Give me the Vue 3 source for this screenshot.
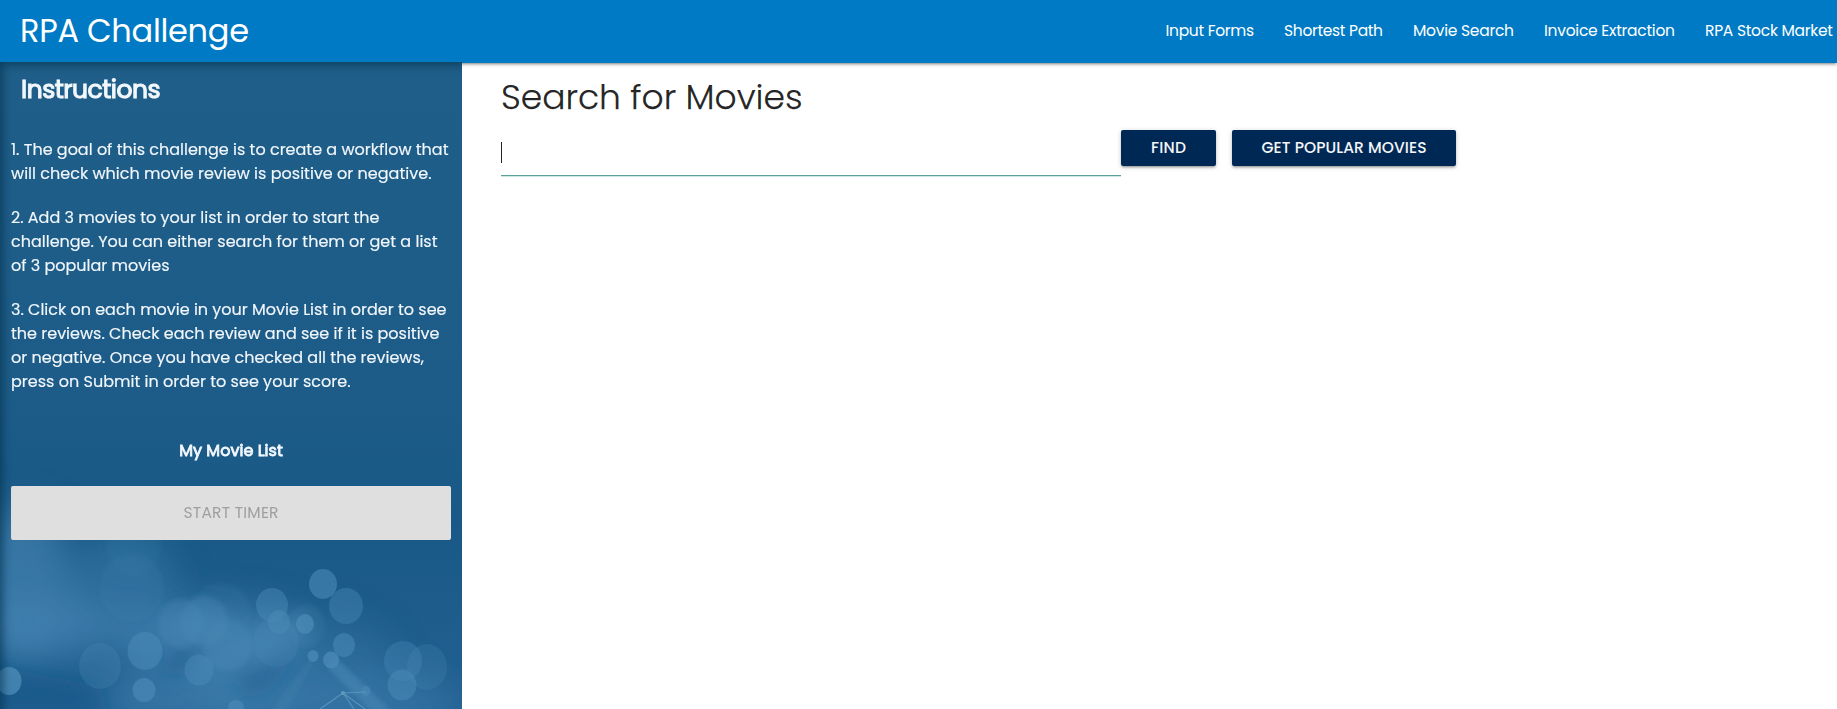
<script setup>
const nav = [
  { text: 'Input Forms', w: 88.5 },
  { text: 'Shortest Path', w: 99 },
  { text: 'Movie Search', w: 101 },
  { text: 'Invoice Extraction', w: 131 },
  { text: 'RPA Stock Market', w: 128 },
]
const steps = [
  [
    ['1. The goal of this challenge is to create a workflow that', 437.5],
    ['will check which movie review is positive or negative.', 420.5],
  ],
  [
    ['2. Add 3 movies to your list in order to start the', 368.5],
    ['challenge. You can either search for them or get a list', 426.5],
    ['of 3 popular movies', 158.5],
  ],
  [
    ['3. Click on each movie in your Movie List in order to see', 435.5],
    ['the reviews. Check each review and see if it is positive', 428.5],
    ['or negative. Once you have checked all the reviews,', 413],
    ['press on Submit in order to see your score.', 339.5],
  ],
]

// Tracks a single line of text so that it fills the given width.
const vFit = {
  mounted(el, { value }) {
    const natural = el.getBoundingClientRect().width
    const gaps = el.textContent.length - 1
    const spacing = (value - natural) / gaps
    el.style.letterSpacing = spacing + 'px'
    el.style.marginRight = -spacing + 'px'
  },
}

// Bokeh discs: cx, cy, rx, ry, opacity
const discs = [
  [323, 584, 14, 15, 0.6], [346, 606, 17, 18, 0.4], [272, 605, 16, 17, 0.45],
  [279, 622, 11, 12, 0.5], [305, 624, 9, 10, 0.7], [344, 645, 11, 12, 0.55],
  [313, 656, 5.5, 6, 0.7], [331, 660, 8, 8.5, 0.75], [145, 651, 17.5, 19, 0.55],
  [144, 690, 11.5, 12, 0.65], [9, 681, 12.5, 14, 0.8], [199, 670, 14.5, 15.5, 0.45],
  [100, 666, 21, 23, 0.25], [403, 661, 19, 20, 0.34], [427, 667, 20, 23, 0.22],
  [402, 685, 14.5, 15.5, 0.5], [276, 642, 23, 25, 0.2], [236, 707, 8, 7, 0.65],
  [366, 691, 4.5, 5, 0.6],
]
const hazyDiscs = [
  [134, 545, 28, 30, 0.08], [132, 588, 32, 34, 0.1], [181, 624, 23, 25, 0.25],
  [204, 621, 24, 25, 0.3], [307, 626, 19, 21, 0.15], [221, 612, 30, 29, 0.12],
  [228, 645, 24, 26, 0.28],
]
</script>

<template>
  <div class="page">
    <header class="topbar">
      <div class="brand"><span v-fit="229">RPA Challenge</span></div>
      <nav class="links">
        <a v-for="n in nav" :key="n.text"><span v-fit="n.w">{{ n.text }}</span></a>
      </nav>
    </header>
    <main class="body">
      <aside class="side">
        <svg class="backdrop" viewBox="0 62 462 647" width="462" height="647" aria-hidden="true">
          <defs>
            <linearGradient id="base" x1="0" y1="0" x2="0" y2="1">
              <stop offset="0" stop-color="#1f5e88" />
              <stop offset="0.5" stop-color="#1d5c88" />
              <stop offset="0.72" stop-color="#195987" />
              <stop offset="0.85" stop-color="#1d5c8b" />
              <stop offset="1" stop-color="#236293" />
            </linearGradient>
            <filter id="soft" x="-50%" y="-50%" width="200%" height="200%"><feGaussianBlur stdDeviation="18" /></filter>
            <filter id="mid" x="-50%" y="-50%" width="200%" height="200%"><feGaussianBlur stdDeviation="9" /></filter>
            <filter id="hazy"><feGaussianBlur stdDeviation="2" /></filter>
            <filter id="edge"><feGaussianBlur stdDeviation="0.6" /></filter>
          </defs>
          <rect y="62" width="462" height="647" fill="url(#base)" />
          <g filter="url(#soft)" fill="#4382b1">
            <ellipse cx="22" cy="585" rx="50" ry="80" opacity="0.7" />
            <ellipse cx="45" cy="628" rx="75" ry="28" opacity="0.75" />
            <ellipse cx="215" cy="640" rx="95" ry="36" opacity="0.75" />
            <ellipse cx="125" cy="590" rx="50" ry="60" opacity="0.45" />
            <ellipse cx="320" cy="660" rx="75" ry="42" opacity="0.3" />
            <ellipse cx="330" cy="705" rx="130" ry="32" opacity="0.5" />
            <ellipse cx="190" cy="700" rx="95" ry="26" opacity="0.6" />
          </g>
          <g filter="url(#mid)">
            <path d="M190 668L250 628L310 608L300 640L230 672Z" fill="#4785b3" opacity="0.5" />
            <ellipse cx="195" cy="625" rx="35" ry="18" fill="#4785b3" opacity="0.4" />
            <path d="M-20 664L100 686L110 715L-20 715Z" fill="#175687" opacity="0.55" />
            <path d="M165 655L205 642L190 668L165 680Z" fill="#1b5a8a" opacity="0.5" />
            <path d="M235 675L300 655L270 690L245 700Z" fill="#1b5a8a" opacity="0.4" />
          </g>
          <g filter="url(#hazy)" fill="#4c8bb8">
            <ellipse v-for="(d, i) in hazyDiscs" :key="i" :cx="d[0]" :cy="d[1]" :rx="d[2]" :ry="d[3]" :opacity="d[4]" />
            <path d="M334 656L392 712L372 712L328 668Z" opacity="0.5" />
            <path d="M309 661L270 712L286 712L314 662Z" opacity="0.22" />
          </g>
          <g filter="url(#edge)" fill="#4c8bb8">
            <ellipse v-for="(d, i) in discs" :key="i" :cx="d[0]" :cy="d[1]" :rx="d[2]" :ry="d[3]" :opacity="d[4]" />
          </g>
          <g stroke="#6299c0" stroke-width="1.2" fill="none" opacity="0.8">
            <path d="M320 709L343 693L365 709M343 693L354 709M343 693L366 692" />
          </g>
          <circle cx="343" cy="693" r="2" fill="#6299c0" />
        </svg>
        <div class="content">
          <h2><span v-fit="139.5">Instructions</span></h2>
          <p v-for="(s, i) in steps" :key="i">
            <span v-for="l in s" :key="l[0]" class="line"><span v-fit="l[1]">{{ l[0] }}</span></span>
          </p>
          <h3><span v-fit="103.5">My Movie List</span></h3>
          <button class="timer" disabled><span v-fit="95">START TIMER</span></button>
        </div>
      </aside>
      <section class="main">
        <h1><span v-fit="301.5">Search for Movies</span></h1>
        <div class="row">
          <div class="field"><i class="caret"></i></div>
          <button class="btn find"><span v-fit="35">FIND</span></button>
          <button class="btn popular"><span v-fit="165">GET POPULAR MOVIES</span></button>
        </div>
      </section>
    </main>
  </div>
</template>

<style>
body {
  background: #fff;
  overflow: hidden;
}
</style>

<style scoped>
.page {
  width: 1837px;
  height: 709px;
  overflow: hidden;
  display: flex;
  flex-direction: column;
  font-family: Poppins, Inter, "Open Sans", sans-serif;
  color: rgba(0, 0, 0, 0.87);
}
.page span {
  display: inline-block;
  white-space: nowrap;
}
.topbar {
  flex: none;
  height: 63px;
  box-sizing: border-box;
  background: #007ac4;
  color: #fff;
  display: flex;
  justify-content: space-between;
  padding: 0 4px 0 20px;
  box-shadow: 0 2px 2px 0 rgba(0, 0, 0, 0.14), 0 3px 1px -2px rgba(0, 0, 0, 0.12), 0 1px 5px 0 rgba(0, 0, 0, 0.2);
}
.brand {
  font-size: 32px;
  line-height: 62px;
}
.links {
  display: flex;
  gap: 30px;
  font-size: 15.5px;
  line-height: 62px;
}
.body {
  flex: 1;
  display: flex;
  margin-top: -1px;
}
.side {
  position: relative;
  flex: none;
  width: 462px;
  height: 647px;
  overflow: hidden;
  color: #f2f7fc;
}
.side::after {
  content: "";
  position: absolute;
  left: 0;
  top: 0;
  width: 480px;
  height: 670px;
  box-shadow: inset 3px 3px 9px rgba(0, 45, 70, 0.6);
  pointer-events: none;
}
.backdrop {
  position: absolute;
  left: 0;
  top: 0;
}
.content {
  position: relative;
  padding: 0 11px;
}
h1, h2, h3, p {
  margin: 0;
}
h2 {
  padding: 10px 0 0 10px;
  height: 76px;
  box-sizing: border-box;
  font-size: 25px;
  line-height: 36px;
  font-weight: 400;
  -webkit-text-stroke: 1.1px currentColor;
}
p {
  margin-bottom: 20px;
  font-size: 16px;
  line-height: 24px;
  -webkit-text-stroke: 0.15px currentColor;
}
.page .line {
  display: block;
}
h3 {
  margin-top: 45px;
  height: 47px;
  font-size: 16px;
  line-height: 24px;
  font-weight: 400;
  -webkit-text-stroke: 0.8px currentColor;
  text-align: center;
}
.timer {
  display: block;
  width: 440px;
  height: 54px;
  border: 0;
  border-radius: 2px;
  padding: 0;
  background: #dfdfdf;
  color: #9f9f9f;
  font: 400 15.5px/54px Poppins, Inter, sans-serif;
  text-align: center;
}
.main {
  padding-left: 39px;
}
h1 {
  height: 68px;
  box-sizing: border-box;
  padding-top: 11px;
  font-size: 34.5px;
  line-height: 48px;
  font-weight: 300;
  -webkit-text-stroke: 0.25px currentColor;
}
.row {
  display: flex;
  align-items: flex-start;
}
.field {
  width: 620px;
  height: 45px;
  border-bottom: 1px solid #5a9f9b;
  box-shadow: 0 1px 0 0 #cfe8e6;
  display: flex;
}
.caret {
  width: 1px;
  height: 21px;
  margin-top: 12px;
  background: #222;
}
.btn {
  height: 36px;
  border: 0;
  border-radius: 2px;
  padding: 0;
  background: #002855;
  color: #f4f6f9;
  font: 500 15.5px/34px Poppins, Inter, sans-serif;
  text-align: center;
  box-shadow: 0 2px 2px 0 rgba(0, 0, 0, 0.14), 0 3px 1px -2px rgba(0, 0, 0, 0.12), 0 1px 5px 0 rgba(0, 0, 0, 0.2);
}
.find {
  width: 95px;
}
.popular {
  width: 224px;
  margin-left: 16px;
}
</style>
